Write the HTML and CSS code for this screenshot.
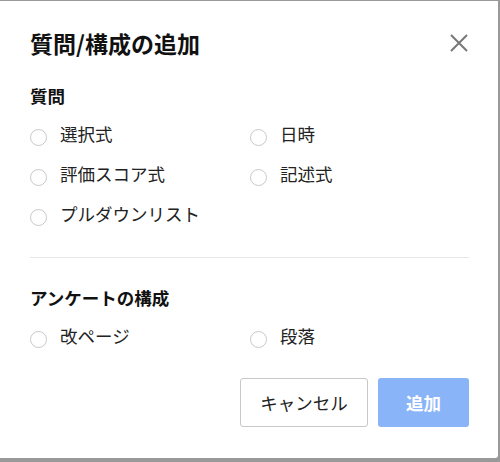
FILE: index.html
```html
<!DOCTYPE html>
<html lang="ja">
<head>
<meta charset="utf-8">
<link rel="stylesheet" href="styles.css">
</head>
<body>
<div class="dialog">
  <div class="header">
    <h1 class="title">質問/構成の追加</h1>
    <button class="close" aria-label="閉じる">
      <svg width="18" height="18" viewBox="0 0 18 18"><path d="M1 1L17 17M17 1L1 17" stroke="#777" stroke-width="2" fill="none"/></svg>
    </button>
  </div>
  <div class="section">
    <div class="section-label">質問</div>
    <div class="options">
      <label class="option"><span class="radio"></span><span class="text">選択式</span></label>
      <label class="option"><span class="radio"></span><span class="text">日時</span></label>
      <label class="option"><span class="radio"></span><span class="text">評価スコア式</span></label>
      <label class="option"><span class="radio"></span><span class="text">記述式</span></label>
      <label class="option"><span class="radio"></span><span class="text">プルダウンリスト</span></label>
    </div>
  </div>
  <div class="divider"></div>
  <div class="section section-second">
    <div class="section-label">アンケートの構成</div>
    <div class="options">
      <label class="option"><span class="radio"></span><span class="text">改ページ</span></label>
      <label class="option"><span class="radio"></span><span class="text">段落</span></label>
    </div>
  </div>
  <div class="actions">
    <button class="btn btn-cancel">キャンセル</button>
    <button class="btn btn-add">追加</button>
  </div>
</div>
</body>
</html>
```

FILE: styles.css
```css
* { box-sizing: border-box; }
html, body {
  margin: 0;
  padding: 0;
}
body {
  background: #999;
  padding-top: 1px;
  font-family: "Noto Sans CJK JP", "Noto Sans", sans-serif;
  width: 500px;
  height: 462px;
  overflow: hidden;
}
.dialog {
  width: 498px;
  height: 457px;
  background: #fff;
  border-radius: 0 0 3px 0;
  padding: 26px 29px 0 30px;
}
.header {
  display: flex;
  align-items: center;
  justify-content: space-between;
  height: 32px;
}
.title {
  margin: 0;
  font-size: 23px;
  line-height: 32px;
  font-weight: 700;
  color: #111;
}
.close {
  border: 0;
  background: none;
  padding: 0;
  margin-right: 1px;
  width: 18px;
  height: 18px;
  display: flex;
}
.section-label {
  font-size: 17.5px;
  line-height: 24px;
  font-weight: 700;
  color: #111;
  margin-top: 25px;
}
.section-second .section-label {
  margin-top: 28px;
}
.options {
  display: grid;
  grid-template-columns: 220px 1fr;
  margin-top: 6px;
}
.option {
  display: flex;
  align-items: flex-start;
  height: 40px;
}
.radio {
  width: 17px;
  height: 17px;
  border: 1.5px solid #c8c8c8;
  border-radius: 50%;
  margin-top: 15px;
  margin-right: 13px;
  flex: none;
}
.text {
  font-size: 17.5px;
  line-height: 40px;
  color: #222;
}
.divider {
  height: 1px;
  background: #e6e6e6;
  margin-top: 23px;
}
.actions {
  display: flex;
  justify-content: flex-end;
  gap: 10px;
  margin-top: 22px;
}
.btn {
  height: 49px;
  border-radius: 3px;
  font-family: "Noto Sans CJK JP", "Noto Sans", sans-serif;
  font-size: 17.5px;
  padding: 0;
}
.btn-cancel {
  width: 128px;
  background: #fff;
  border: 1px solid #c8c8c8;
  color: #222;
}
.btn-add {
  width: 91px;
  background: #8ab4f8;
  border: 0;
  color: #fff;
  font-weight: 700;
}
```
